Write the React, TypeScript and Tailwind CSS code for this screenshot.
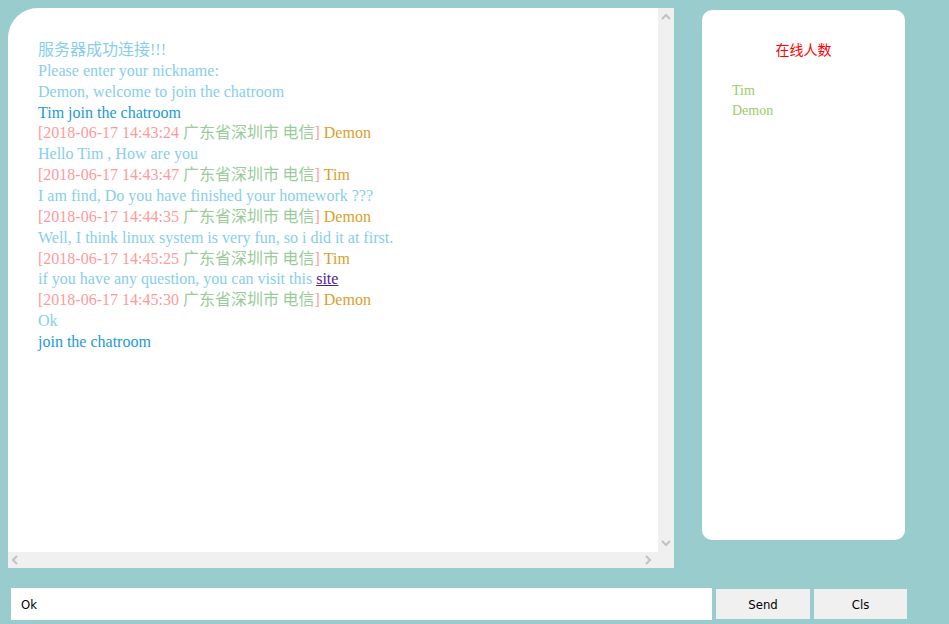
const serif = "font-['Liberation_Serif','Noto_Sans_CJK_SC',serif]";

type Msg =
  | { kind: "sys"; text: string; dark?: boolean }
  | { kind: "head"; time: string; who: string }
  | { kind: "body"; text: string; link?: string };

const messages: Msg[] = [
  { kind: "sys", text: "服务器成功连接!!!" },
  { kind: "sys", text: "Please enter your nickname:" },
  { kind: "sys", text: "Demon, welcome to join the chatroom" },
  { kind: "sys", text: "Tim join the chatroom", dark: true },
  { kind: "head", time: "2018-06-17 14:43:24", who: "Demon" },
  { kind: "body", text: "Hello Tim , How are you" },
  { kind: "head", time: "2018-06-17 14:43:47", who: "Tim" },
  { kind: "body", text: "I am find, Do you have finished your homework ???" },
  { kind: "head", time: "2018-06-17 14:44:35", who: "Demon" },
  { kind: "body", text: "Well, I think linux system is very fun, so i did it at first." },
  { kind: "head", time: "2018-06-17 14:45:25", who: "Tim" },
  { kind: "body", text: "if you have any question, you can visit this ", link: "site" },
  { kind: "head", time: "2018-06-17 14:45:30", who: "Demon" },
  { kind: "body", text: "Ok" },
  { kind: "sys", text: "join the chatroom", dark: true },
];

function Chevron({ dir }: { dir: "up" | "down" | "left" | "right" }) {
  const d = {
    up: "M1 6 L5 2 L9 6",
    down: "M1 2 L5 6 L9 2",
    left: "M6 1 L2 5 L6 9",
    right: "M2 1 L6 5 L2 9",
  }[dir];
  const vert = dir === "up" || dir === "down";
  return (
    <svg width={vert ? 10 : 8} height={vert ? 8 : 10} viewBox={vert ? "0 0 10 8" : "0 0 8 10"}>
      <path d={d} fill="none" stroke="#c2c2c2" strokeWidth="2" />
    </svg>
  );
}

const row = "h-[20.86px] leading-[20.86px] whitespace-nowrap";

function Line({ m }: { m: Msg }) {
  if (m.kind === "sys")
    return <div className={`${row} ${m.dark ? "text-[#1c9bd4]" : "text-[#87ceeb]"}`}>{m.text}</div>;
  if (m.kind === "head")
    return (
      <div className={row}>
        <span className="text-[#ff9a9a]">[{m.time} </span>
        <span className="text-[#99cc99] leading-none font-['Noto_Sans_CJK_SC',sans-serif]">广东省深圳市 电信</span>
        <span className="text-[#ff9a9a]">]</span>
        <span className="text-[#d9a12c]"> {m.who}</span>
      </div>
    );
  return (
    <div className={`${row} text-[#87ceeb]`}>
      {m.text}
      {m.link && <a className="text-[#551a8b] underline">{m.link}</a>}
    </div>
  );
}

const ui = "text-[13px] text-black font-['DejaVu_Sans_Condensed','DejaVu_Sans',sans-serif]";

export default function App() {
  return (
    <div className="w-[949px] h-[624px] bg-[#99cccc] relative overflow-hidden">
      <div className="flex items-start pt-2 pl-2">
        {/* chat log */}
        <div className="w-[666px] h-[560px] bg-white rounded-tl-[30px] flex flex-col overflow-hidden">
          <div className="flex flex-1 min-h-0">
            <div className={`flex-1 pt-[32px] pl-[30px] text-[16px] ${serif}`}>
              {messages.map((m, i) => (
                <Line key={i} m={m} />
              ))}
            </div>
            <div className="w-[16px] bg-[#f0f0f0] flex flex-col items-center justify-between py-[5px]">
              <Chevron dir="up" />
              <Chevron dir="down" />
            </div>
          </div>
          <div className="h-[16px] bg-[#f0f0f0] flex items-center justify-between pl-[3px] pr-[22px]">
            <Chevron dir="left" />
            <Chevron dir="right" />
          </div>
        </div>

        {/* online users */}
        <div className="ml-[28px] mt-[2px] w-[203px] h-[530px] bg-white rounded-[10px]">
          <div className="pt-[29px] text-center text-[14px] text-[#ff0000] font-['Noto_Sans_CJK_SC',sans-serif] leading-[20px]">
            在线人数
          </div>
          <div className={`mt-[22px] pl-[30px] text-[14px] leading-[20px] text-[#99cc66] ${serif}`}>
            <div>Tim</div>
            <div>Demon</div>
          </div>
        </div>
      </div>

      {/* input row */}
      <div className="flex items-center mt-[20px] pl-[11px] gap-[4px]">
        <div className={`w-[701px] h-[32px] bg-white flex items-center pl-[10px] pt-[2px] ${ui}`}>Ok</div>
        <button className={`w-[94px] h-[30px] bg-[#f0f0f0] pt-[2px] ${ui}`}>Send</button>
        <button className={`w-[93px] h-[30px] bg-[#f0f0f0] pt-[2px] ${ui}`}>Cls</button>
      </div>
    </div>
  );
}
